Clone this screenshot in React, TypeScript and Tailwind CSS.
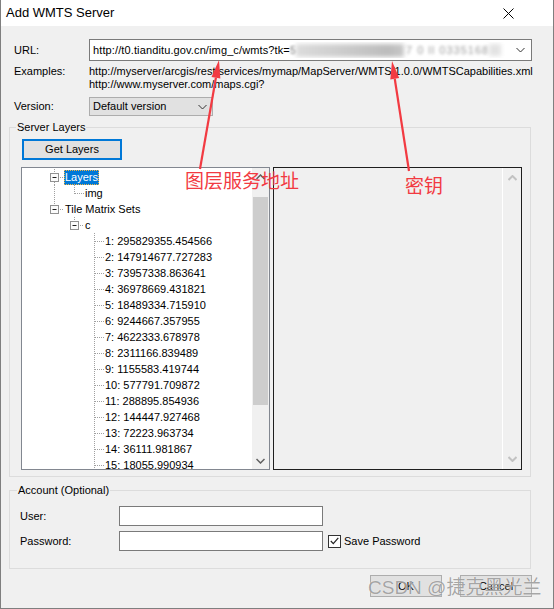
import React from "react";

type CellKind = "blank" | "pipe" | "tee" | "elbow" | "boxTee" | "boxElbow";

const DOT = "#a0a0a0";
const RED = "#f23a42";

function TreeCell({ kind }: { kind: CellKind }) {
  return (
    <svg width="20" height="16" viewBox="0 0 20 16" className="shrink-0">
      {(kind === "pipe" || kind === "tee") && (
        <line x1="10.5" y1="0" x2="10.5" y2="16" stroke={DOT} strokeDasharray="1 1" />
      )}
      {kind === "elbow" && <line x1="10.5" y1="0" x2="10.5" y2="9" stroke={DOT} strokeDasharray="1 1" />}
      {(kind === "tee" || kind === "elbow") && (
        <line x1="11" y1="8.5" x2="20" y2="8.5" stroke={DOT} strokeDasharray="1 1" />
      )}
      {(kind === "boxTee" || kind === "boxElbow") && (
        <>
          <line x1="10.5" y1="0" x2="10.5" y2="4" stroke={DOT} strokeDasharray="1 1" />
          {kind === "boxTee" && <line x1="10.5" y1="13" x2="10.5" y2="16" stroke={DOT} strokeDasharray="1 1" />}
          <rect x="6.5" y="4.5" width="8" height="8" fill="#fbfbfb" stroke="#919191" />
          <line x1="8.5" y1="8.5" x2="12.5" y2="8.5" stroke="#202020" />
          <line x1="16" y1="8.5" x2="20" y2="8.5" stroke={DOT} strokeDasharray="1 1" />
        </>
      )}
    </svg>
  );
}

const scales = [
  "295829355.454566",
  "147914677.727283",
  "73957338.863641",
  "36978669.431821",
  "18489334.715910",
  "9244667.357955",
  "4622333.678978",
  "2311166.839489",
  "1155583.419744",
  "577791.709872",
  "288895.854936",
  "144447.927468",
  "72223.963734",
  "36111.981867",
  "18055.990934",
  "9027.995467",
];

const rows: { cells: CellKind[]; text: string; selected?: boolean }[] = [
  { cells: ["boxTee"], text: "Layers", selected: true },
  { cells: ["pipe", "elbow"], text: "img" },
  { cells: ["boxElbow"], text: "Tile Matrix Sets" },
  { cells: ["blank", "boxElbow"], text: "c" },
  ...scales.map((s, i) => ({ cells: ["blank", "blank", "tee"] as CellKind[], text: `${i + 1}: ${s}` })),
];

function Chevron({ up, color = "#333", width = 1 }: { up?: boolean; color?: string; width?: number }) {
  return (
    <svg width="9" height="6" viewBox="0 0 9 6">
      <path d={up ? "M0.5 5 L4.5 1 L8.5 5" : "M0.5 1 L4.5 5 L8.5 1"} fill="none" stroke={color} strokeWidth={width} />
    </svg>
  );
}

function Arrow({ x1, y1, x2, y2 }: { x1: number; y1: number; x2: number; y2: number }) {
  const dx = x2 - x1;
  const dy = y2 - y1;
  const len = Math.hypot(dx, dy);
  const ux = dx / len;
  const uy = dy / len;
  const bx = x2 - ux * 18;
  const by = y2 - uy * 18;
  const px = -uy;
  const py = ux;
  const pts = `${x2},${y2} ${bx + px * 4.5},${by + py * 4.5} ${bx - px * 4.5},${by - py * 4.5}`;
  return (
    <g>
      <line x1={x1} y1={y1} x2={bx} y2={by} stroke={RED} strokeWidth="2.2" />
      <polygon points={pts} fill={RED} />
    </g>
  );
}

export default function App() {
  return (
    <div className="w-[554px] h-[609px] relative overflow-hidden bg-[#f0f0f0] border-x border-b border-[#7f7f7f] font-['Liberation_Sans',Arial,sans-serif] text-[11px] text-black">
      {/* title bar */}
      <div className="h-[26px] bg-white flex items-center justify-between pl-[5px]">
        <span className="text-[13px]">Add WMTS Server</span>
        <svg width="11" height="11" viewBox="0 0 11 11" className="mr-[39px]">
          <path d="M0.5 0.5 L10.5 10.5 M10.5 0.5 L0.5 10.5" stroke="#000" strokeWidth="1" />
        </svg>
      </div>

      {/* URL */}
      <div className="mt-[13px] flex items-center h-[22px]">
        <div className="w-[88px] pl-[13px]">URL:</div>
        <div className="w-[443px] h-[22px] border border-[#7a7a7a] bg-white flex items-center pl-[3px] pr-[6px]">
          <div className="flex-1 flex items-center whitespace-nowrap overflow-hidden">
            <span className="tracking-[0.12px]">http://t0.tianditu.gov.cn/img_c/wmts?tk=</span>
            <span className="blur-[1px] text-[#777]">5</span>
            <span className="inline-block w-[108px] h-[13px] blur-[2px] bg-[linear-gradient(90deg,#dcdcdc,#cfcfcf_35%,#c6c6c6_60%,#bcbcbc_85%,#c8c8c8)]" />
            <span className="blur-[1.4px] text-[#9a9a9a] tracking-[1px] ml-[2px]">7 0 ll 0335168</span>
            <span className="inline-block w-[12px] h-[12px] blur-[2px] bg-[#e3e3e3]" />
          </div>
          <Chevron />
        </div>
      </div>

      {/* Examples */}
      <div className="mt-[4px] flex leading-[13px]">
        <div className="w-[88px] pl-[13px]">Examples:</div>
        <div>
          <div>http://myserver/arcgis/rest/services/mymap/MapServer/WMTS/1.0.0/WMTSCapabilities.xml</div>
          <div>http://www.myserver.com/maps.cgi?</div>
        </div>
      </div>

      {/* Version */}
      <div className="mt-[6px] flex items-center h-[19px]">
        <div className="w-[88px] pl-[13px]">Version:</div>
        <div className="w-[124px] h-[19px] bg-[#e1e1e1] border border-[#adadad] flex items-center justify-between pl-[3px] pr-[5px]">
          <span>Default version</span>
          <Chevron />
        </div>
      </div>

      {/* Server Layers */}
      <fieldset className="mt-[5px] ml-[8px] w-[522px] border border-[#dcdcdc] pb-[6px]">
        <legend className="ml-[6px] px-[1px] leading-[13px]">Server Layers</legend>
        <button className="mt-[5px] ml-[12px] w-[100px] h-[21px] border-2 border-[#0078d7] bg-[#e1e1e1] flex items-center justify-center text-[11px]">
          Get Layers
        </button>
        <div className="mt-[7px] ml-[11px] flex gap-[3px]">
          {/* tree */}
          <div className="w-[249px] h-[303px] border border-[#828790] bg-white flex">
            <div className="flex-1 overflow-hidden pt-[1px] pl-[22px]">
              {rows.map((r) => (
                <div key={r.text} className="h-[16px] flex items-center whitespace-nowrap">
                  {r.cells.map((c, i) => (
                    <TreeCell key={i} kind={c} />
                  ))}
                  {r.selected ? (
                    <span className="h-[15px] flex items-center px-[1px] bg-[#0078d7] text-white outline outline-1 outline-dotted outline-[#f5b540] -outline-offset-1">
                      {r.text}
                    </span>
                  ) : (
                    <span className="pl-[1px]">{r.text}</span>
                  )}
                </div>
              ))}
            </div>
            <div className="w-[17px] bg-[#f0f0f0] flex flex-col">
              <div className="h-[17px] flex items-center justify-center">
                <Chevron up color="#606060" width={1.5} />
              </div>
              <div className="flex-1 pt-[12px]">
                <div className="mx-[1px] h-[208px] bg-[#cdcdcd]" />
              </div>
              <div className="h-[17px] flex items-center justify-center">
                <Chevron color="#606060" width={1.5} />
              </div>
            </div>
          </div>

          {/* right panel */}
          <div className="w-[249px] h-[303px] border border-[#1e1e1e] bg-[#f0f0f0] flex">
            <div className="flex-1" />
            <div className="w-[1px] bg-white" />
            <div className="w-[18px] flex flex-col justify-between">
              <div className="h-[20px] flex items-center justify-center">
                <Chevron up color="#c2c2c2" width={2} />
              </div>
              <div className="h-[20px] flex items-center justify-center">
                <Chevron color="#c2c2c2" width={2} />
              </div>
            </div>
          </div>
        </div>
      </fieldset>

      {/* Account */}
      <fieldset className="mt-[7px] ml-[8px] w-[522px] border border-[#dcdcdc] pb-[17px]">
        <legend className="ml-[7px] px-[1px] leading-[13px]">Account (Optional)</legend>
        <div className="mt-[9px] flex items-center pl-[10px]">
          <div className="w-[99px]">User:</div>
          <div className="w-[204px] h-[20px] border border-[#7a7a7a] bg-white" />
        </div>
        <div className="mt-[5px] flex items-center pl-[10px]">
          <div className="w-[99px]">Password:</div>
          <div className="w-[204px] h-[20px] border border-[#7a7a7a] bg-white" />
          <div className="ml-[5px] w-[13px] h-[13px] border border-[#333] bg-white flex items-center justify-center">
            <svg width="9" height="8" viewBox="0 0 9 8">
              <path d="M0.8 4 L3.3 6.6 L8.3 0.8" fill="none" stroke="#222" strokeWidth="1.2" />
            </svg>
          </div>
          <span className="ml-[3px]">Save Password</span>
        </div>
      </fieldset>

      {/* buttons */}
      <div className="mt-[6px] flex justify-end gap-[18px] pr-[21px]">
        <button className="w-[72px] h-[22px] bg-[#e1e1e1] border border-[#adadad] text-[11px]">OK</button>
        <button className="w-[72px] h-[22px] bg-[#e1e1e1] border border-[#adadad] text-[11px]">Cancel</button>
      </div>

      {/* annotations */}
      <svg className="absolute left-[-1px] top-0 pointer-events-none" width="554" height="609" viewBox="0 0 554 609">
        <Arrow x1={200} y1={169} x2={219} y2={60} />
        <Arrow x1={409} y1={171} x2={392} y2={61} />
      </svg>
      <span className="absolute left-[184px] top-[169px] text-[19px] leading-[22px] text-[#f23a42] font-['Noto_Sans_CJK_SC',sans-serif]">
        图层服务地址
      </span>
      <span className="absolute left-[404px] top-[174px] text-[19px] leading-[22px] text-[#f23a42] font-['Noto_Sans_CJK_SC',sans-serif]">
        密钥
      </span>
      <span className="absolute left-[367px] top-[576px] text-[19px] leading-[24px] text-[#5a5a5a]/55 font-['Liberation_Sans','Noto_Sans_CJK_SC',sans-serif] [text-shadow:0_0_1px_#fff]">
        CSDN @捷克黑光兰
      </span>
    </div>
  );
}
